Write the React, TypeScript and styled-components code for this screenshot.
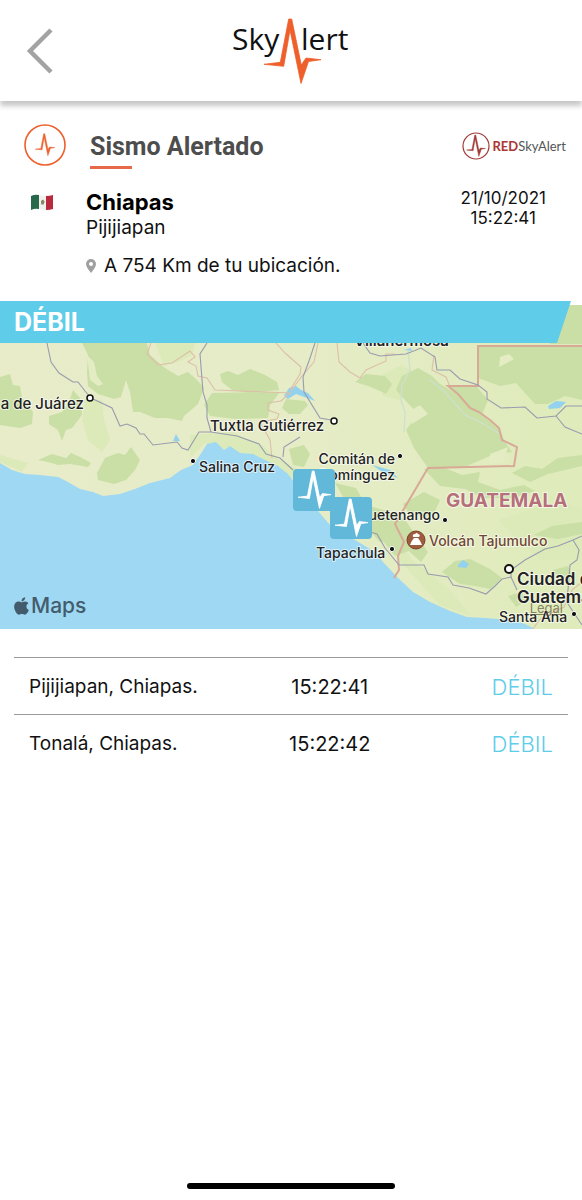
import React from "react";
import styled, { createGlobalStyle } from "styled-components";
import { FaApple } from "react-icons/fa";

const GlobalStyle = createGlobalStyle`
  * { box-sizing: border-box; }
  body {
    margin: 0;
    background: #fff;
    color: #111;
    font-family: Inter, "Liberation Sans", sans-serif;
  }
`;

const ORANGE = "#ee5f2b";
const CYAN = "#5fcde9";

const Page = styled.div`
  min-height: 100vh;
  display: flex;
  flex-direction: column;
`;

const Header = styled.header`
  height: 101px;
  padding: 0 26px;
  display: grid;
  grid-template-columns: 30px 1fr 30px;
  align-items: center;
  background: #fff;
  box-shadow: 0 5px 5px rgba(0, 0, 0, 0.22);
`;

const BackButton = styled.button`
  padding: 0;
  border: 0;
  background: none;
  display: flex;
`;

const Logo = styled.svg`
  justify-self: center;
  font-family: "Open Sans", sans-serif;
`;

const Summary = styled.section`
  padding: 23px 16px 23px 24px;
`;

const TitleRow = styled.div`
  height: 64px;
  display: flex;
  align-items: flex-start;
`;

const TitleBlock = styled.div`
  flex: 1;
  margin: 8px 0 0 24px;
`;

const Title = styled.h1`
  margin: 0;
  font: 700 25px/30px Roboto, sans-serif;
  color: #4d4d4d;
`;

const Underline = styled.div`
  width: 42px;
  height: 3px;
  margin-top: 4px;
  background: #e8694a;
`;

const Network = styled.div`
  margin-top: 8px;
  display: flex;
  align-items: center;
  gap: 2px;
  font: 400 13px/20px Lato, sans-serif;
  color: #555;

  b {
    font-weight: 700;
    color: #ab3634;
  }
`;

const PlaceRow = styled.div`
  display: grid;
  grid-template-columns: 55px 1fr auto;
  padding: 0 20px 0 7px;
`;

const FlagIcon = styled.svg`
  margin-top: 6px;
`;

const PlaceName = styled.h2`
  margin: 0;
  font-size: 22px;
  line-height: 28px;
  font-weight: 700;
  color: #000;
`;

const Town = styled.p`
  margin: 0;
  font-size: 19px;
  line-height: 24px;
`;

const Distance = styled.p`
  margin: 14px 0 0;
  display: flex;
  align-items: center;
  gap: 8px;
  font-size: 19px;
  line-height: 24px;
  white-space: nowrap;
`;

const Timestamp = styled.time`
  font-size: 17px;
  line-height: 20px;
  text-align: center;
`;

const Banner = styled.div`
  position: relative;
  z-index: 1;
  height: 42px;
  margin-right: 11px;
  padding-left: 14px;
  background: ${CYAN};
  clip-path: polygon(0 0, 100% 0, calc(100% - 14px) 100%, 0 100%);
  font-size: 25px;
  line-height: 42px;
  font-weight: 700;
  color: #fff;
`;

const MapFrame = styled.section`
  position: relative;
  height: 324px;
  margin-top: -38px;
`;

const MapCanvas = styled.svg`
  display: block;
  width: 100%;
  height: 100%;
`;

const Label = styled.text<{ $size?: number; $weight?: number; $color?: string }>`
  font-size: ${(p) => p.$size ?? 14}px;
  font-weight: ${(p) => p.$weight ?? 500};
  fill: ${(p) => p.$color ?? "#222"};
  stroke: rgba(255, 255, 255, 0.65);
  stroke-width: 2px;
  stroke-linejoin: round;
  paint-order: stroke;
`;

const MapsBrand = styled.div`
  position: absolute;
  left: 14px;
  bottom: 10px;
  display: flex;
  align-items: center;
  gap: 2px;
  font-size: 21px;
  line-height: 26px;
  font-weight: 500;
  color: #435c6d;

  svg {
    width: 15px;
    height: 20px;
  }
`;

const LegalLink = styled.a`
  position: absolute;
  right: 19px;
  bottom: 12px;
  font-size: 13px;
  line-height: 18px;
  color: rgba(90, 80, 50, 0.7);
`;

const Reports = styled.table`
  width: calc(100% - 28px);
  margin: 28px 14px 0;
  border-collapse: collapse;
  table-layout: fixed;
`;

const Report = styled.tr`
  height: 57px;
  border-top: 1px solid #999;
`;

const Cell = styled.td<{ $align?: string }>`
  padding: 2px 15px 0;
  font-size: ${(p) => (p.$align === "center" ? 20 : 19)}px;
  line-height: 24px;
  text-align: ${(p) => p.$align ?? "left"};
  white-space: nowrap;
`;

const Intensity = styled(Cell)`
  font-size: 22px;
  font-weight: 300;
  color: ${CYAN};
`;

const HomeIndicator = styled.div`
  width: 208px;
  height: 6px;
  margin: auto auto 11px;
  border-radius: 3px;
  background: #000;
`;

const PULSE =
  "M0 45.3 L16.3 43.3 L24.7 0 H27.7 L37.3 46 L42 39 L57 40.7 L44.5 42.5 L37 64.5 L26 11 L19.7 47.3 Z";

const PulseBadge = ({ size, radius, scale, color, line }: {
  size: number; radius: number; scale: number; color: string; line: number;
}) => (
  <svg width={size} height={size} viewBox={`0 0 ${size} ${size}`} aria-hidden="true">
    <circle cx={size / 2} cy={size / 2} r={radius} fill="none" stroke={color} strokeWidth={line} />
    <path
      d={PULSE}
      fill={color}
      stroke={color}
      strokeWidth="1.5"
      transform={`translate(${size / 2 - 28.5 * scale} ${size / 2 - 33 * scale}) scale(${scale})`}
    />
  </svg>
);

const QuakePin = ({ x, y }: { x: number; y: number }) => (
  <g transform={`translate(${x} ${y})`}>
    <rect width="42" height="42" rx="4" fill="#62b8d9" />
    <path d={PULSE} fill="#fff" stroke="#fff" strokeWidth="1.5" transform="translate(5 2) scale(.58)" />
  </g>
);

const Flag = () => (
  <FlagIcon width="23" height="17" viewBox="0 0 23 17" role="img" aria-label="México">
    <path d="M0 2 Q4 0 8 1 V15 Q4 14 0 16Z" fill="#27694a" />
    <path d="M8 1 Q11 2 15 2 V16 Q11 16 8 15Z" fill="#f1f1ee" />
    <path d="M15 2 Q19 2 22 1 V15 Q19 16 15 16Z" fill="#b92b3c" />
    <path d="M10 7 l2 -1.5 l1.6 2 l-1 3 l-2.4 0z" fill="#8a8062" />
  </FlagIcon>
);

const City = ({ x, y, r = 3 }: { x: number; y: number; r?: number }) => (
  <circle cx={x} cy={y} r={r} fill="#fff" stroke="#111" strokeWidth={r > 3 ? 2 : 1.5} />
);

const Dot = ({ x, y }: { x: number; y: number }) => (
  <circle cx={x} cy={y} r="2.6" fill="#111" stroke="#fff" strokeWidth="1" />
);

const RegionMap = () => (
  <MapCanvas viewBox="0 305 582 324" preserveAspectRatio="xMidYMid slice" role="img" aria-label="Mapa de Chiapas y Guatemala">
    <defs>
      <linearGradient id="land" x1="0" x2="1" y1="0" y2="0">
        <stop offset="0" stopColor="#e8ecc9" />
        <stop offset="0.55" stopColor="#e5ecc6" />
        <stop offset="1" stopColor="#dfebba" />
      </linearGradient>
    </defs>
    <rect y="305" width="582" height="324" fill="url(#land)" />

    <g fill="#dbeab8">
      <path d="M85 398 L102 400 L104 420 L110 440 L102 452 L88 440 L82 420Z" />
      <path d="M155 343 L195 343 L192 355 L178 362 L164 366Z" />
      <path d="M190 435 L232 432 L262 445 L278 459 L300 470 L295 480 L260 461 L205 443 L190 458Z" />
      <path d="M381 375 L402 365 L420 376 L400 400 L382 396Z" />
      <path d="M498 520 L560 500 L582 510 L582 560 L540 560Z" />
      <path d="M355 500 L395 555 L440 605 L470 615 L450 590 L412 560 L385 520Z" />
      <path d="M0 455 L28 463 L22 472 L0 462Z" />
    </g>

    <g fill="#c9dfa5">
      <path d="M82 343 L147 343 L150 355 L165 368 L178 376 L188 372 L197 380 L204 388 L198 404 L184 416 L182 421 L168 418 L155 418 L140 412 L133 412 L130 392 L126 380 L121 397 L114 399 L98 394 L88 386 L87 372 L88 355Z" />
      <path d="M0 377 L10 374 L13 385 L20 386 L22 398 L33 412 L32 424 L20 428 L0 425Z" />
      <path d="M49 416 L62 412 L68 405 L73 390 L80 398 L82 415 L72 428 L66 430 L62 441 L58 430 L49 424Z" />
      <path d="M38 460 L52 454 L66 458 L71 453 L80 457 L91 463 L88 467 L70 464 L58 465 L48 462Z" />
      <path d="M97 473 L105 458 L118 453 L125 455 L131 447 L140 460 L135 470 L126 480 L114 484 L98 480Z" />
      <path d="M220 374 L228 371 L238 375 L250 369 L265 375 L277 382 L279 390 L250 393 L232 390 L222 382Z" />
      <path d="M212 393 L268 392 L280 392 L270 405 L268 418 L236 419 L210 416 L204 405Z" />
      <path d="M286 399 L305 401 L308 405 L300 414 L289 414 L282 408Z" />
      <path d="M355 382 L366 374 L385 376 L392 384 L386 394 L378 390 L368 386Z" />
      <path d="M289 449 L304 445 L310 454 L304 467 L293 465Z" />
      <path d="M335 483 L356 488 L374 520 L392 540 L380 542 L360 520 L345 500Z" />
      <path d="M478 346 H582 V400 L565 396 L548 404 L535 404 L516 383 L500 386 L478 378Z" />
      <path d="M556 305 H582 V344 H550Z" />
      <path d="M402 376 L418 368 L432 376 L440 384 L447 388 L458 394 L478 410 L488 420 L500 430 L505 442 L512 452 L490 456 L462 468 L428 468 L414 448 L406 430 L418 414 L405 400 L396 390Z" />
      <path d="M450 387 L477 387 L488 400 L482 415 L468 407 L458 396Z" />
      <path d="M525 466 L512 473 L530 482 L548 474 L582 466 V455 L558 458 L542 469Z" />
      <path d="M424 469 L440 466 L462 475 L480 472 L478 482 L500 490 L524 485 L535 491 L512 498 L483 498 L465 489 L440 486Z" />
      <path d="M403 504 L424 492 L440 500 L433 515 L423 517 L408 512Z" />
      <path d="M367 505 L390 512 L405 520 L428 552 L421 562 L409 551 L395 556 L382 540 L374 525Z" />
      <path d="M442 572 L455 561 L470 559 L490 569 L502 578 L490 589 L475 586 L460 584Z" />
      <path d="M534 535 L552 526 L582 522 V534 L558 539Z" />
      <path d="M508 596 L521 592 L528 600 L516 607Z" />
      <path d="M553 570 L568 566 L573 576 L560 579Z" />
    </g>

    <g fill="#e3ecc2">
      <path d="M87 355 L94 362 L97 376 L103 384 L98 386 L90 380Z" />
      <path d="M500 357 L509 354 L514 359 L507 363 L499 367Z" />
      <path d="M408 412 L420 405 L428 414 L412 424Z" />
      <path d="M490 454 L508 447 L504 461 L489 465Z" />
    </g>

    <path
      fill="#9fd8f2"
      d="M0 463 L12 470 L25 474 L40 475 L58 477 L68 482 L80 489 L93 492 L103 496 L120 494 L135 489 L150 483 L170 478 L181 470 L193 465 L202 452 L207 444 L216 442 L224 450 L230 446 L240 453 L253 454 L265 460 L278 466 L288 474 L300 490 L330 525 L355 540 L375 552 L383 562 L398 578 L413 592 L430 602 L450 611 L467 617 L485 618 L510 620 L525 624 L535 629 H0Z"
    />
    <g fill="#93d2ee">
      <path d="M284 396 L289 388 L296 386 L301 390 L308 393 L315 401 L307 398 L296 394 L288 399Z" />
      <path d="M548 406 L556 401 L566 402 L560 408 L549 409Z" />
      <path d="M458 565 L463 560 L469 564 L466 568 L458 567Z" />
      <path d="M173 441 L176 434 L180 441Z" />
      <path d="M404 350 L411 348 L412 351Z" />
      <path d="M372 465 L390 470 L398 478 L384 473Z" />
    </g>

    <g fill="none" stroke="#ddbfa8" strokeWidth="1.1">
      <path d="M151 343 L147 354 L158 365 L172 363 L190 351 L195 357 L188 362 L196 366 L198 376 L207 378 L215 390 L290 393 L281 401 L268 403 L268 410 L279 414 L277 419 L260 422 L270 440 L272 458" />
      <path d="M276 343 L285 353 L301 367 L300 374 L290 390" />
      <path d="M318 343 L314 362 L302 376 L291 391" />
      <path d="M337 343 L339 362 L350 372 L360 378 L366 370 L386 361 L386 354 L395 354" />
      <path d="M434 355 L432 370 L446 377 L450 387" />
      <path d="M582 582 L572 590 L564 607 L540 619 L533 629" />
    </g>
    <g fill="none" stroke="#cfe0cc" strokeWidth="1.4">
      <path d="M408 350 L410 370 L402 385 L401 400 L405 412 L404 432" />
      <path d="M430 380 L445 392 L465 415 L484 424 L500 434" />
    </g>
    <g fill="none" stroke="#d9a998" strokeWidth="2">
      <path d="M582 346 H478 V386 H448 L458 394 L470 408 L479 412 L490 420 L499 428 L502 440 L517 447 L514 466 L428 468 L395 524 L401 536 L404 542 L398 556 L399 570 L394 578" />
    </g>
    <g fill="none" stroke="#989cae" strokeWidth="1.1">
      <path d="M47 343 L51 362 L59 373 L73 382 L78 382 L85 391 L91 398 L112 408 L120 426 L127 424 L136 428 L140 434 L144 434 L153 445 L177 442 L182 448 L188 450 L199 432 L211 432 L237 436 L259 444 L266 454 L280 458 L293 470" />
      <path d="M207 343 L200 354 L203 392 L207 405 L207 418 L211 432" />
      <path d="M315 343 L309 361 L303 377 L304 392 L320 418 L331 420" />
      <path d="M300 437 L284 447 L283 457" />
      <path d="M363 343 L370 353 L380 356 L406 354 L421 348 L435 357 L437 370 L450 370 L460 379 L478 385 L487 392 L487 399 L501 408 L525 407 L537 418 L556 416 L566 406 L582 406" />
      <path d="M556 416 L565 427 L582 434" />
      <path d="M370 532 L377 534 L385 548 L399 565 L424 565 L428 574 L448 577 L453 585 L469 588 L486 594 L495 586 L502 579 L511 577 L511 570 L525 560 L545 549 L558 546 L573 540 L582 536" />
      <path d="M573 540 L579 550 L577 560 L570 565 L568 590 L566 601 L582 625" />
      <path d="M511 577 L517 590" />
    </g>

    <City x={90} y={398} />
    <City x={334} y={421} />
    <City x={509} y={569} r={4} />
    <Dot x={193} y={461} />
    <Dot x={400} y={456} />
    <Dot x={445} y={520} />
    <Dot x={392} y={549} />
    <Dot x={574} y={614} />

    <Label x="84" y="409" textAnchor="end" $size={15}>Oaxaca de Juárez</Label>
    <Label x="210" y="431" $size={15}>Tuxtla Gutiérrez</Label>
    <Label x="199" y="472">Salina Cruz</Label>
    <Label x="354" y="346" $size={15} $weight={600}>Villahermosa</Label>
    <Label x="395" y="464" textAnchor="end">Comitán de</Label>
    <Label x="395" y="480" textAnchor="end">Domínguez</Label>
    <Label x="440" y="520" textAnchor="end">Huehuetenango</Label>
    <Label x="316" y="558">Tapachula</Label>
    <Label x="446" y="507" $size={19} $weight={700} $color="#b5707a">GUATEMALA</Label>
    <circle cx="416" cy="540" r="9" fill="#a05a3c" stroke="#7b422d" />
    <path d="M410 545 Q412 540 414 538 H418 Q420 540 422 545Z M413 537 Q412 534 415 534 Q417 532 418 534 Q421 535 419 537Z" fill="#fff" />
    <Label x="429" y="546" $color="#70482f">Volcán Tajumulco</Label>
    <Label x="517" y="585" $size={17} $weight={600}>Ciudad de</Label>
    <Label x="517" y="603" $size={17} $weight={600}>Guatemala</Label>
    <Label x="499" y="622">Santa Ana</Label>

    <QuakePin x={293} y={469} />
    <QuakePin x={330} y={497} />
  </MapCanvas>
);

const reports = [
  { place: "Pijijiapan, Chiapas.", time: "15:22:41", level: "DÉBIL" },
  { place: "Tonalá, Chiapas.", time: "15:22:42", level: "DÉBIL" },
];

export default function App() {
  return (
    <Page>
      <GlobalStyle />
      <Header>
        <BackButton aria-label="Regresar">
          <svg width="28" height="46" viewBox="0 0 28 46">
            <path d="M25 2 L4 23 L25 44" fill="none" stroke="#a3a3a3" strokeWidth="4.5" />
          </svg>
        </BackButton>
        <Logo width="118" height="66" viewBox="232 18 118 66" role="img" aria-label="SkyAlert">
          <text x="232" y="50" fontSize="30" fill="#111">Sky</text>
          <text x="301" y="50" fontSize="30" fill="#111">lert</text>
          <path d={PULSE} fill={ORANGE} stroke={ORANGE} strokeWidth="0.8" transform="translate(264 19)" />
        </Logo>
      </Header>

      <main>
        <Summary>
          <TitleRow>
            <PulseBadge size={42} radius={20} scale={0.34} color={ORANGE} line={1.6} />
            <TitleBlock>
              <Title>Sismo Alertado</Title>
              <Underline />
            </TitleBlock>
            <Network>
              <PulseBadge size={28} radius={13} scale={0.33} color="#a13a38" line={1.2} />
              <span><b>RED</b>SkyAlert</span>
            </Network>
          </TitleRow>
          <PlaceRow>
            <Flag />
            <div>
              <PlaceName>Chiapas</PlaceName>
              <Town>Pijijiapan</Town>
              <Distance>
                <svg width="10" height="14" viewBox="0 0 10 14" aria-hidden="true">
                  <path d="M5 0 A5 5 0 0 1 10 5 Q10 8 5 14 Q0 8 0 5 A5 5 0 0 1 5 0Z M5 3 A2 2 0 1 0 5 7 A2 2 0 1 0 5 3Z" fill="#a0a0a0" fillRule="evenodd" />
                </svg>
                A 754 Km de tu ubicación.
              </Distance>
            </div>
            <Timestamp dateTime="2021-10-21T15:22:41">
              21/10/2021
              <br />
              15:22:41
            </Timestamp>
          </PlaceRow>
        </Summary>

        <Banner>DÉBIL</Banner>
        <MapFrame>
          <RegionMap />
          <MapsBrand>
            <FaApple aria-hidden="true" />
            Maps
          </MapsBrand>
          <LegalLink href="#legal">Legal</LegalLink>
        </MapFrame>

        <Reports>
          <colgroup>
            <col style={{ width: "43%" }} />
            <col style={{ width: "28%" }} />
            <col />
          </colgroup>
          <tbody>
            {reports.map((r) => (
              <Report key={r.time}>
                <Cell>{r.place}</Cell>
                <Cell $align="center">{r.time}</Cell>
                <Intensity $align="right">{r.level}</Intensity>
              </Report>
            ))}
          </tbody>
        </Reports>
      </main>
      <HomeIndicator />
    </Page>
  );
}
